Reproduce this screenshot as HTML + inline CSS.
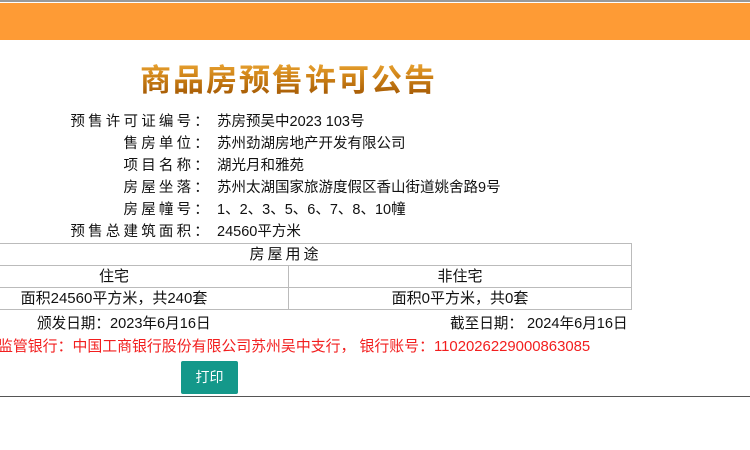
<!DOCTYPE html>
<html><head><meta charset="utf-8"><style>
body{margin:0;width:750px;height:450px;background:#fff;font-family:"Liberation Sans","Noto Sans CJK SC",sans-serif;color:#111;position:relative;overflow:hidden}
.top{position:absolute;left:0;top:0;width:750px;height:2px;background:#999}
.band{position:absolute;left:0;top:3px;width:750px;height:37px;background:#fe9b35}
.title{position:absolute;left:140px;top:56px;font-size:31px;font-weight:bold;font-family:"Noto Sans CJK SC",sans-serif;letter-spacing:2px;color:#d08a1a;background:linear-gradient(#f5b440,#d08418 45%,#9a5000);-webkit-background-clip:text;background-clip:text;-webkit-text-fill-color:transparent;line-height:44px;white-space:nowrap}
.row{position:absolute;left:0;height:22px;line-height:22px;font-size:14.5px;white-space:nowrap}
.lab{position:absolute;right:538px;letter-spacing:3.2px;text-align:right}
.val{position:absolute;left:217px}
table{position:absolute;left:-61px;top:243px;width:693px;border-collapse:collapse;font-size:15px}
td{border:1px solid #bbb;height:21px;padding:0;text-align:center;line-height:21px}
.d{position:absolute;top:313px;font-size:14.6px;line-height:22px}
.red{position:absolute;left:-2px;top:336px;color:#f21e1e;font-size:14.9px;line-height:22px;white-space:nowrap}
.btn{position:absolute;left:181px;top:361px;width:57px;height:33px;background:#14988a;color:#fff;font-size:14px;line-height:33px;text-align:center;border-radius:2px}
.bot{position:absolute;left:0;top:396px;width:750px;height:1px;background:#555}
</style></head><body>
<div class="top"></div><div class="band"></div>
<div class="title">商品房预售许可公告</div>
<div class="row" style="top:111px;width:750px"><span class="lab">预售许可证编号：</span><span class="val">苏房预吴中2023 103号</span></div>
<div class="row" style="top:133px;width:750px"><span class="lab">售房单位：</span><span class="val">苏州劲湖房地产开发有限公司</span></div>
<div class="row" style="top:155px;width:750px"><span class="lab">项目名称：</span><span class="val">湖光月和雅苑</span></div>
<div class="row" style="top:177px;width:750px"><span class="lab">房屋坐落：</span><span class="val">苏州太湖国家旅游度假区香山街道姚舍路9号</span></div>
<div class="row" style="top:199px;width:750px"><span class="lab">房屋幢号：</span><span class="val">1、2、3、5、6、7、8、10幢</span></div>
<div class="row" style="top:221px;width:750px"><span class="lab">预售总建筑面积：</span><span class="val">24560平方米</span></div>
<table>
<tr><td colspan="2" style="letter-spacing:3px">房屋用途</td></tr>
<tr><td style="width:348px">住宅</td><td>非住宅</td></tr>
<tr><td>面积24560平方米，共240套</td><td>面积0平方米，共0套</td></tr>
</table>
<div class="d" style="left:37px">颁发日期：2023年6月16日</div>
<div class="d" style="left:450px">截至日期： 2024年6月16日</div>
<div class="red">监管银行：中国工商银行股份有限公司苏州吴中支行， 银行账号：1102026229000863085</div>
<div class="btn">打印</div>
<div class="bot"></div>
</body></html>
